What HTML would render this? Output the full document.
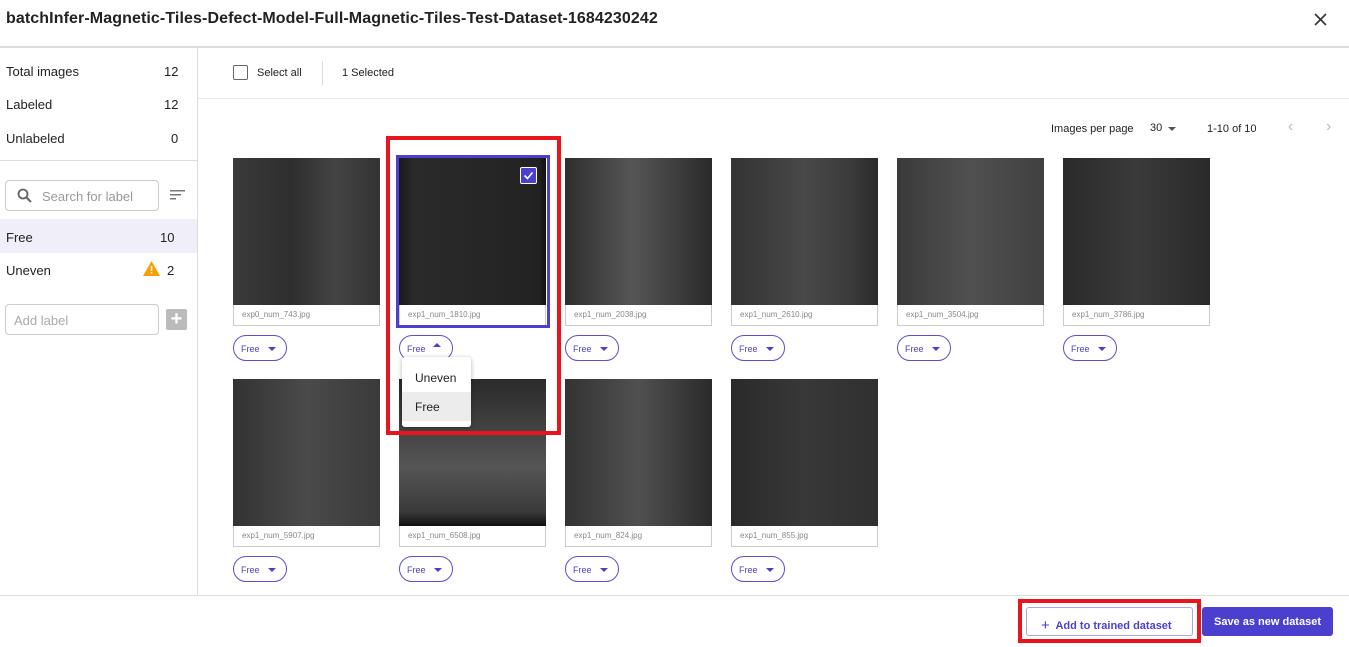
<!DOCTYPE html>
<html><head><style>
*{box-sizing:border-box;margin:0;padding:0}
body{width:1349px;height:647px;background:#fff;font-family:"Liberation Sans",sans-serif;color:#222;position:relative;overflow:hidden}
.a{position:absolute}
.title{left:6px;top:10px;font-size:16px;letter-spacing:0.1px;font-weight:bold;color:#222}
.img{width:147px;height:147px}
.cap{width:147px;height:21px;border:1px solid #ccc;border-top:none;font-size:8px;color:#888;padding:5px 0 0 8px}
.chip{width:54px;height:26px;border:1px solid #5a4fcf;border-radius:13px;font-size:9px;color:#4a3fcf;padding:8px 0 0 7px}
.chip.d:after{content:"";position:absolute;left:34px;top:11px;border-left:4px solid transparent;border-right:4px solid transparent;border-top:4px solid #4a3fcf}
.side{font-size:13px;color:#222}
</style></head><body>
<div class="a title">batchInfer-Magnetic-Tiles-Defect-Model-Full-Magnetic-Tiles-Test-Dataset-1684230242</div>
<svg class="a" style="left:1314px;top:13px" width="13" height="13"><path d="M1 1L12 12M12 1L1 12" stroke="#333" stroke-width="1.6"/></svg>
<div class="a" style="left:0;top:46px;width:1349px;height:2px;background:#ddd"></div>
<div class="a" style="left:197px;top:47px;width:1px;height:548px;background:#ddd"></div>
<div class="a" style="left:0;top:595px;width:1349px;height:1px;background:#ddd"></div>
<div class="a" style="left:198px;top:98px;width:1151px;height:1px;background:#e6e6e6"></div>

<div class="a side" style="left:6px;top:64px">Total images</div><div class="a side" style="left:164px;top:64px">12</div>
<div class="a side" style="left:6px;top:97px">Labeled</div><div class="a side" style="left:164px;top:97px">12</div>
<div class="a side" style="left:6px;top:131px">Unlabeled</div><div class="a side" style="left:171px;top:131px">0</div>
<div class="a" style="left:0;top:160px;width:197px;height:1px;background:#ddd"></div>
<div class="a" style="left:5px;top:180px;width:154px;height:31px;border:1px solid #ccc;border-radius:4px;font-size:13px;color:#999;padding:8px 0 0 36px">Search for label</div>
<svg class="a" style="left:17px;top:188px" width="16" height="16"><circle cx="6" cy="6" r="4.5" stroke="#666" stroke-width="1.8" fill="none"/><line x1="9.5" y1="9.5" x2="14" y2="14" stroke="#666" stroke-width="2"/></svg>
<svg class="a" style="left:170px;top:190px" width="16" height="12"><rect x="0" y="0" width="15" height="1.5" fill="#777"/><rect x="0" y="4" width="11" height="1.5" fill="#777"/><rect x="0" y="8" width="6" height="1.5" fill="#777"/></svg>
<div class="a" style="left:0;top:219px;width:197px;height:34px;background:#efeef9"></div>
<div class="a side" style="left:6px;top:230px">Free</div><div class="a side" style="left:160px;top:230px">10</div>
<div class="a side" style="left:6px;top:263px">Uneven</div><div class="a side" style="left:167px;top:263px">2</div>
<svg class="a" style="left:143px;top:261px" width="17" height="15"><path d="M8.5 0L17 15H0Z" fill="#f5a000"/><rect x="7.7" y="5" width="1.6" height="5" fill="#fff"/><rect x="7.7" y="11" width="1.6" height="1.6" fill="#fff"/></svg>
<div class="a" style="left:5px;top:304px;width:154px;height:31px;border:1px solid #ccc;border-radius:4px;font-size:13px;color:#aaa;padding:8px 0 0 8px">Add label</div>
<div class="a" style="left:166px;top:309px;width:21px;height:21px;background:#bbb;border-radius:2px;color:#fff;font-size:20px;line-height:20px;text-align:center;font-weight:bold">+</div>

<div class="a" style="left:233px;top:65px;width:15px;height:15px;border:1.5px solid #666;border-radius:2px"></div>
<div class="a" style="left:257px;top:67px;font-size:11px;color:#222">Select all</div>
<div class="a" style="left:322px;top:61px;width:1px;height:24px;background:#ddd"></div>
<div class="a" style="left:342px;top:67px;font-size:11px;color:#222">1 Selected</div>
<div class="a" style="left:1051px;top:123px;font-size:11px;color:#222">Images per page</div>
<div class="a" style="left:1150px;top:122px;font-size:11px;color:#222">30</div>
<div class="a" style="left:1168px;top:127px;border-left:4px solid transparent;border-right:4px solid transparent;border-top:4px solid #555"></div>
<div class="a" style="left:1207px;top:123px;font-size:11px;color:#222">1-10 of 10</div>
<div class="a" style="left:1288px;top:118px;font-size:16px;color:#bbb">‹</div>
<div class="a" style="left:1326px;top:118px;font-size:16px;color:#bbb">›</div>

<!-- row1 -->
<div class="a img" style="left:233px;top:158px;background:linear-gradient(90deg,#3a3a3a,#2e2e2e 40%,#444 70%,#333)"></div>
<div class="a cap" style="left:233px;top:305px">exp0_num_743.jpg</div><div class="a chip d" style="left:233px;top:335px">Free</div>
<div class="a img" style="left:399px;top:158px;background:linear-gradient(90deg,#1a1a1a,#2a2a2a 10%,#262626 60%,#222 95%,#111)"></div>
<div class="a cap" style="left:399px;top:305px">exp1_num_1810.jpg</div>
<div class="a" style="left:396px;top:155px;width:154px;height:173px;border:3px solid #4a3fcf"></div>
<div class="a" style="left:520px;top:167px;width:17px;height:17px;background:#4a3fcf;border:1px solid #fff;border-radius:2px"></div>
<svg class="a" style="left:523px;top:170px" width="11" height="11"><path d="M1.5 5.5L4.5 8.5L9.5 2.5" stroke="#fff" stroke-width="1.6" fill="none"/></svg>
<div class="a chip" style="left:399px;top:335px">Free</div>
<div class="a" style="left:433px;top:343px;width:0;height:0;border-left:4px solid transparent;border-right:4px solid transparent;border-bottom:4px solid #4a3fcf"></div>
<div class="a img" style="left:565px;top:158px;background:linear-gradient(90deg,#2e2e2e,#555 45%,#4a4a4a 60%,#2a2a2a)"></div>
<div class="a cap" style="left:565px;top:305px">exp1_num_2038.jpg</div><div class="a chip d" style="left:565px;top:335px">Free</div>
<div class="a img" style="left:731px;top:158px;background:linear-gradient(90deg,#333,#484848 50%,#3c3c3c 80%,#2a2a2a)"></div>
<div class="a cap" style="left:731px;top:305px">exp1_num_2610.jpg</div><div class="a chip d" style="left:731px;top:335px">Free</div>
<div class="a img" style="left:897px;top:158px;background:linear-gradient(90deg,#3a3a3a,#505050 50%,#404040)"></div>
<div class="a cap" style="left:897px;top:305px">exp1_num_3504.jpg</div><div class="a chip d" style="left:897px;top:335px">Free</div>
<div class="a img" style="left:1063px;top:158px;background:linear-gradient(90deg,#2a2a2a,#3a3a3a 50%,#2a2a2a)"></div>
<div class="a cap" style="left:1063px;top:305px">exp1_num_3786.jpg</div><div class="a chip d" style="left:1063px;top:335px">Free</div>
<!-- row2 -->
<div class="a img" style="left:233px;top:379px;background:linear-gradient(90deg,#333,#4a4a4a 50%,#3a3a3a)"></div>
<div class="a cap" style="left:233px;top:526px">exp1_num_5907.jpg</div><div class="a chip d" style="left:233px;top:556px">Free</div>
<div class="a img" style="left:399px;top:379px;background:linear-gradient(180deg,#2a2a2a,#555 60%,#3a3a3a 90%,#111)"></div>
<div class="a cap" style="left:399px;top:526px">exp1_num_6508.jpg</div><div class="a chip d" style="left:399px;top:556px">Free</div>
<div class="a img" style="left:565px;top:379px;background:linear-gradient(90deg,#333,#505050 50%,#2a2a2a)"></div>
<div class="a cap" style="left:565px;top:526px">exp1_num_824.jpg</div><div class="a chip d" style="left:565px;top:556px">Free</div>
<div class="a img" style="left:731px;top:379px;background:linear-gradient(90deg,#2a2a2a,#383838 50%,#303030)"></div>
<div class="a cap" style="left:731px;top:526px">exp1_num_855.jpg</div><div class="a chip d" style="left:731px;top:556px">Free</div>

<!-- dropdown -->
<div class="a" style="left:402px;top:357px;width:69px;height:70px;background:#fff;border-radius:3px;box-shadow:0 1px 5px rgba(0,0,0,.3)"></div>
<div class="a" style="left:402px;top:392px;width:69px;height:29px;background:#ececec"></div>
<div class="a" style="left:415px;top:371px;font-size:12px;color:#222">Uneven</div>
<div class="a" style="left:415px;top:400px;font-size:12px;color:#222">Free</div>
<div class="a" style="left:386px;top:136px;width:175px;height:299px;border:4px solid #e8141e"></div>

<!-- footer -->
<div class="a" style="left:1018px;top:599px;width:183px;height:44px;border:4px solid #e8141e"></div>
<div class="a" style="left:1026px;top:607px;width:167px;height:29px;border:1px solid #aaa6e6;border-radius:3px;font-size:11px;font-weight:bold;color:#4a3fcf;padding:8px 0 0 14px"><span style="font-size:15px;font-weight:normal;position:relative;top:1px">+</span>&nbsp; Add to trained dataset</div>
<div class="a" style="left:1202px;top:607px;width:131px;height:29px;background:#4a3fcf;border-radius:3px;font-size:11px;font-weight:bold;color:#fff;text-align:center;padding-top:9px">Save as new dataset</div>
</body></html>
